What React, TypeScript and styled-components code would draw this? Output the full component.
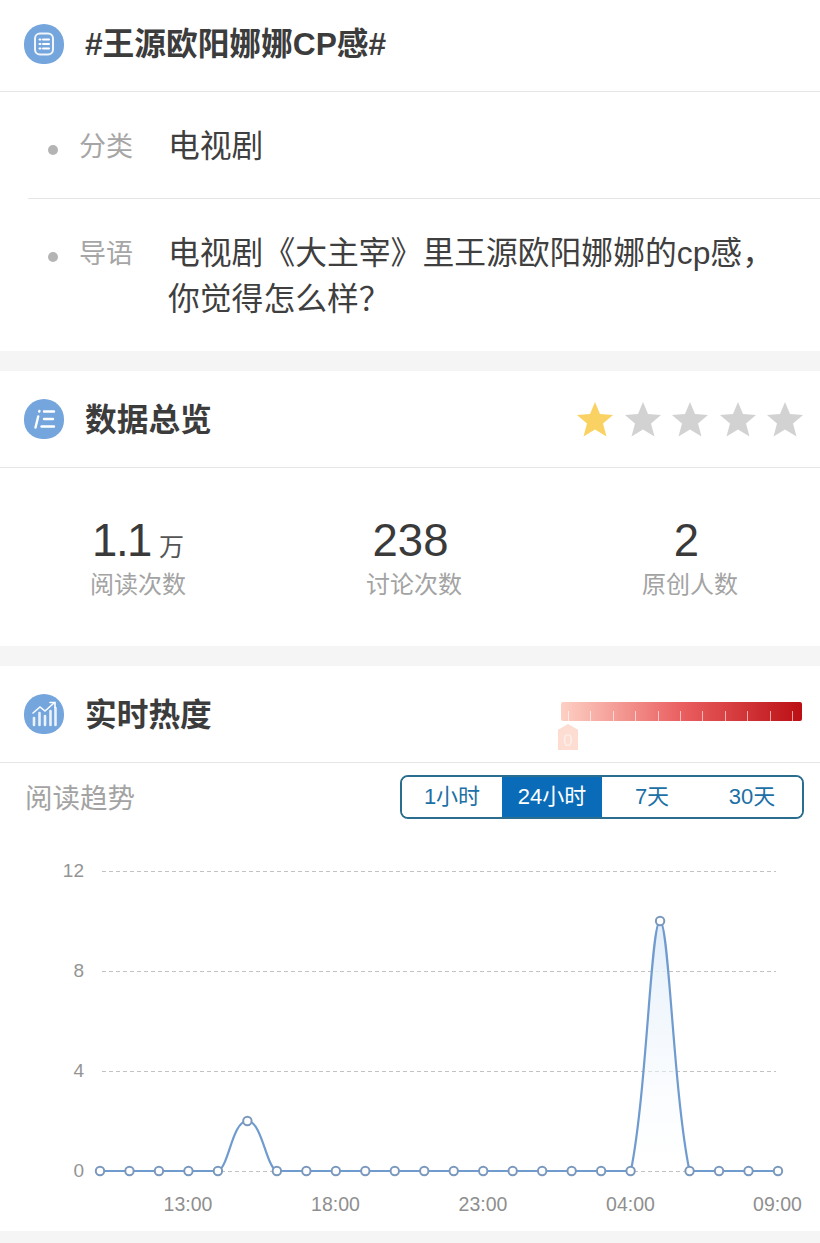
import React from "react";
import styled, { createGlobalStyle } from "styled-components";

const GlobalStyle = createGlobalStyle`
  html, body {
    margin: 0;
    padding: 0;
    background: #f5f5f5;
    overflow: hidden;
  }
  * {
    box-sizing: border-box;
  }
  body {
    font-family: "Liberation Sans", "Noto Sans CJK SC", sans-serif;
  }
`;

const Page = styled.div`
  width: 820px;
  height: 1243px;
  background: #f5f5f5;
`;
const Section = styled.section<{ $gap?: number }>`
  background: #fff;
  margin-bottom: ${props => props.$gap || 0}px;
`;
const Header = styled.div<{ $height: number; $bottom?: number }>`
  display: flex;
  align-items: center;
  height: ${props => props.$height}px;
  padding: 0 18px ${props => props.$bottom || 0}px 24px;
  border-bottom: 1px solid #e6e6e6;
`;
const IconBadge = styled.div`
  display: flex;
  align-items: center;
  justify-content: center;
  width: 40px;
  height: 40px;
  border-radius: 50% 50% 46% 46%;
  background: #74a5dd;
  flex-shrink: 0;
`;
const Title = styled.h2`
  margin: 1px 0 0 21px;
  font-size: 31.7px;
  line-height: 40px;
  font-weight: 700;
  color: #3c3c3c;
  flex-grow: 1;
`;
const InfoRow = styled.div<{ $height: number; $top: number; $line?: boolean }>`
  display: flex;
  align-items: flex-start;
  height: ${props => props.$height}px;
  margin-left: 28px;
  padding-top: ${props => props.$top}px;
  border-bottom: ${props => (props.$line ? "1px solid #e6e6e6" : "none")};
`;
const Dot = styled.span`
  width: 10px;
  height: 10px;
  margin: 22px 21px 0 20px;
  border-radius: 50%;
  background: #b4b4b4;
  flex-shrink: 0;
`;
const InfoLabel = styled.span`
  width: 89px;
  margin-top: 1px;
  font-size: 27px;
  line-height: 46px;
  color: #a6a6a6;
  flex-shrink: 0;
`;
const InfoText = styled.p`
  margin: 0;
  width: 610px;
  font-size: 31.8px;
  line-height: 46px;
  color: #3f3f3f;
`;
const Stars = styled.div`
  display: flex;
  gap: 11.5px;
  margin-right: -1px;
`;
const Stats = styled.div`
  display: flex;
  justify-content: space-between;
  height: 178px;
  padding: 46px 82px 0 90px;
`;
const Stat = styled.div`
  display: flex;
  flex-direction: column;
  align-items: center;
  width: 96px;
  white-space: nowrap;
`;
const StatValue = styled.div<{ $nudge?: number; $tight?: boolean }>`
  margin-right: ${props => props.$nudge || 0}px;
  font-size: 45.5px;
  line-height: 54px;
  letter-spacing: ${props => (props.$tight ? "-1.5px" : "0")};
  color: #3a3a3a;
`;
const StatUnit = styled.span`
  margin-left: 8px;
  font-size: 25px;
  line-height: 1;
  letter-spacing: 0;
  color: #555;
`;
const StatLabel = styled.div`
  font-size: 24px;
  line-height: 34px;
  color: #a3a3a3;
`;
const HeatMeter = styled.div`
  position: relative;
  width: 241px;
  height: 19px;
  margin-top: -5px;
  border-radius: 2px;
  background: linear-gradient(90deg, #fdd0c4 0%, #ea5f60 50%, #bb0f14 100%);
`;
const HeatTicks = styled.div`
  position: absolute;
  left: 7px;
  right: 9px;
  bottom: 0;
  display: flex;
  justify-content: space-between;
`;
const HeatTick = styled.i`
  display: block;
  width: 1px;
  height: 10px;
  background: rgba(255, 255, 255, 0.6);
`;
const HeatMarker = styled.div`
  position: absolute;
  left: -3px;
  top: 22px;
  width: 20px;
  height: 26px;
  padding-top: 7px;
  clip-path: polygon(50% 0, 100% 22%, 100% 100%, 0 100%, 0 22%);
  background: #fddcd2;
  color: #fbeee9;
  font-size: 17px;
  line-height: 19px;
  text-align: center;
`;
const ToolRow = styled.div`
  display: flex;
  align-items: center;
  justify-content: space-between;
  height: 70px;
  padding: 0 16px 2px 25px;
`;
const ToolTitle = styled.div`
  margin-bottom: 2px;
  font-size: 27.5px;
  color: #a3a3a3;
`;
const Tabs = styled.div`
  display: flex;
  width: 404px;
  height: 44px;
  border: 2px solid #2a6d8f;
  border-radius: 8px;
  overflow: hidden;
`;
const Tab = styled.div<{ $active?: boolean }>`
  flex: 1;
  font-size: 22px;
  line-height: 40px;
  text-align: center;
  color: ${props => (props.$active ? "#fff" : "#1c70a6")};
  background: ${props => (props.$active ? "#0a6cb8" : "#fff")};
`;
const ChartBox = styled.div`
  height: 398px;
  svg {
    display: block;
  }
`;

const StarIcon = ({ color }: { color: string }) => (
  <svg width="36" height="36" viewBox="0 0 36 36">
    <polygon
      points="18,1 23,13 36,14 26,22.5 29.5,35.5 18,28.5 6.5,35.5 10,22.5 0,14 13,13"
      fill={color}
    />
  </svg>
);

const ListIcon = () => (
  <svg width="22" height="24" viewBox="0 0 22 24" fill="none" stroke="#fff" strokeLinecap="round">
    <rect x="2" y="1.5" width="18" height="21" rx="5" strokeWidth="2" opacity="0.9" />
    <path d="M6.5 7.5h1M10 7.5h6M6.5 12h1M10 12h6M6.5 16.5h1M10 16.5h6" strokeWidth="2" />
  </svg>
);

const IndentIcon = () => (
  <svg width="24" height="22" viewBox="0 0 24 22" fill="none" stroke="#fff" strokeLinecap="round" strokeWidth="2.4">
    <path d="M3.5 19.5 6.2 8.5M7.2 3.5l.2-.6M12 3.5h10M12 11h9M9.5 18.5h12.5" />
  </svg>
);

const TrendIcon = () => (
  <svg width="28" height="26" viewBox="0 0 28 26" fill="none" stroke="#fff" strokeLinecap="round">
    <path d="M3 12 10 6l5 4 9-8" strokeWidth="1.6" opacity="0.95" />
    <path d="M20 1.5h5v5" strokeWidth="1.6" />
    <path d="M4 24v-7M9.5 24V12M15 24v-9M20.5 24V10M25.5 24V7" strokeWidth="2.6" opacity="0.85" />
  </svg>
);

const toY = (value: number) => 1171 - value * 25 - 833;
const points = Array.from({ length: 24 }, (_, i) => {
  const value = i === 5 ? 2 : i === 19 ? 10 : 0;
  return { x: 100 + i * 29.478, y: toY(value) };
});

const smallPeak = "C 229 1167 232 1121 247.4 1121 C 262 1121 266 1167 276.9 1171";
const bigPeak = "C 647 1090 651 921 660 921 C 669 921 673 1090 689.5 1171";
const shift = (d: string) =>
  d.replace(/(-?[\d.]+) (-?[\d.]+)/g, (_, x, y) => `${x} ${parseFloat(y) - 833}`);

const linePath = shift(
  `M 100 1171 L 217.9 1171 ${smallPeak} L 630.9 1171 ${bigPeak} L 778 1171`
);
const areaBig = shift(`M 630.9 1171 ${bigPeak} Z`);

const Chart = () => (
  <svg width="820" height="398" viewBox="0 0 820 398">
    <defs>
      <linearGradient id="area" x1="0" y1="0" x2="0" y2="1">
        <stop offset="0" stopColor="#dfecf9" stopOpacity="0.9" />
        <stop offset="1" stopColor="#ffffff" stopOpacity="0.3" />
      </linearGradient>
    </defs>
    {[12, 8, 4, 0].map(v => (
      <g key={v}>
        <line
          x1="102"
          x2={v === 0 ? 778 : 776}
          y1={toY(v) + 0.5}
          y2={toY(v) + 0.5}
          stroke="#c2c2c2"
          strokeWidth="1"
          strokeDasharray="4 3"
        />
        <text x="84" y={toY(v) + 6} textAnchor="end" fontSize="19" fill="#949494">
          {v}
        </text>
      </g>
    ))}
    <path d={areaBig} fill="url(#area)" />
    <path d={linePath} fill="none" stroke="#6f9bcf" strokeWidth="2.2" />
    {points.map(p => (
      <circle key={p.x} cx={p.x} cy={p.y} r="4.2" fill="#fff" stroke="#7a98bd" strokeWidth="2" />
    ))}
    {[
      { x: 188, t: "13:00" },
      { x: 335.5, t: "18:00" },
      { x: 483, t: "23:00" },
      { x: 630.5, t: "04:00" },
      { x: 777.5, t: "09:00" },
    ].map(l => (
      <text key={l.t} x={l.x} y="378" textAnchor="middle" fontSize="19.5" fill="#8f8f8f">
        {l.t}
      </text>
    ))}
  </svg>
);

const App = () => {
  return (
    <Page>
      <GlobalStyle />
      <Section $gap={20}>
        <Header $height={92} $bottom={4}>
          <IconBadge>
            <ListIcon />
          </IconBadge>
          <Title>#王源欧阳娜娜CP感#</Title>
        </Header>
        <InfoRow $height={107} $top={31} $line>
          <Dot />
          <InfoLabel>分类</InfoLabel>
          <InfoText>电视剧</InfoText>
        </InfoRow>
        <InfoRow $height={152} $top={31}>
          <Dot />
          <InfoLabel>导语</InfoLabel>
          <InfoText>电视剧《大主宰》里王源欧阳娜娜的cp感，你觉得怎么样？</InfoText>
        </InfoRow>
      </Section>
      <Section $gap={20}>
        <Header $height={97}>
          <IconBadge>
            <IndentIcon />
          </IconBadge>
          <Title>数据总览</Title>
          <Stars>
            <StarIcon color="#fad264" />
            <StarIcon color="#d2d2d2" />
            <StarIcon color="#d2d2d2" />
            <StarIcon color="#d2d2d2" />
            <StarIcon color="#d2d2d2" />
          </Stars>
        </Header>
        <Stats>
          <Stat>
            <StatValue $tight>
              1.1<StatUnit>万</StatUnit>
            </StatValue>
            <StatLabel>阅读次数</StatLabel>
          </Stat>
          <Stat>
            <StatValue $nudge={7}>238</StatValue>
            <StatLabel>讨论次数</StatLabel>
          </Stat>
          <Stat>
            <StatValue $nudge={7}>2</StatValue>
            <StatLabel>原创人数</StatLabel>
          </Stat>
        </Stats>
      </Section>
      <Section>
        <Header $height={97}>
          <IconBadge>
            <TrendIcon />
          </IconBadge>
          <Title>实时热度</Title>
          <HeatMeter>
            <HeatTicks>
              {Array.from({ length: 11 }, (_, i) => (
                <HeatTick key={i} />
              ))}
            </HeatTicks>
            <HeatMarker>0</HeatMarker>
          </HeatMeter>
        </Header>
        <ToolRow>
          <ToolTitle>阅读趋势</ToolTitle>
          <Tabs>
            <Tab>1小时</Tab>
            <Tab $active>24小时</Tab>
            <Tab>7天</Tab>
            <Tab>30天</Tab>
          </Tabs>
        </ToolRow>
        <ChartBox>
          <Chart />
        </ChartBox>
      </Section>
    </Page>
  );
};

export default App;
